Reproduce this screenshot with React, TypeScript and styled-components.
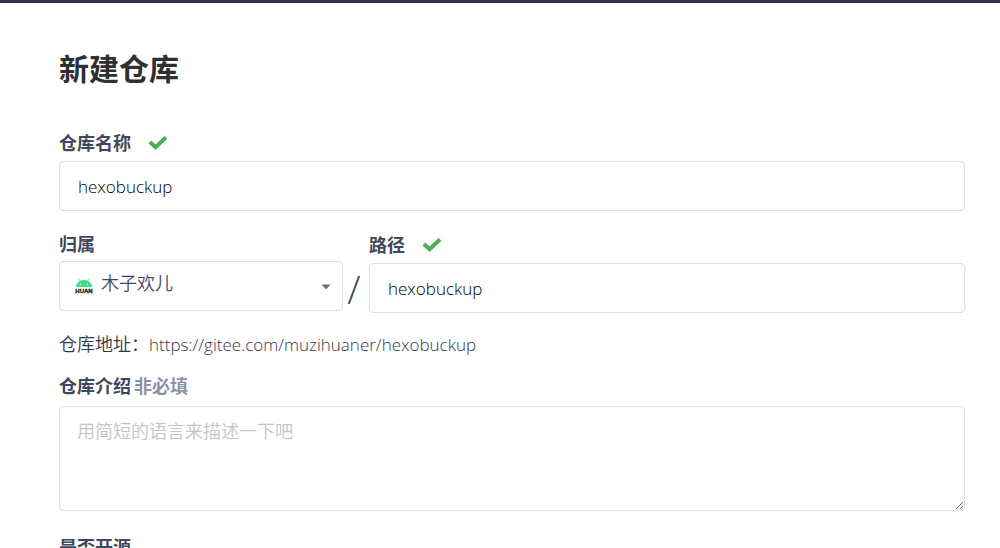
import React from "react";
import styled, { createGlobalStyle, css } from "styled-components";

const GlobalStyle = createGlobalStyle`
  *, *::before, *::after { box-sizing: border-box; }
  body {
    margin: 0;
    background: #fff;
    color: #40485b;
    font-family: "Open Sans", "Noto Sans CJK SC", sans-serif;
    font-size: 18px;
    line-height: 24px;
  }
`;

const Page = styled.div`
  height: 100vh;
  overflow: hidden;
`;

const TopBar = styled.header`
  height: 3px;
  background: #2f3542;
`;

const Form = styled.form`
  padding: 46px 35px 0 59px;
`;

const Title = styled.h1`
  margin: 0 0 42px;
  color: #303030;
  font-size: 30px;
  line-height: 40px;
  font-weight: 700;
`;

const LabelRow = styled.div<{ $compact?: boolean }>`
  display: flex;
  align-items: center;
  gap: 17px;
  height: ${(p) => (p.$compact ? 22 : 24)}px;
  margin-bottom: 6px;
`;

const Label = styled.label`
  font-weight: 700;
`;

const Optional = styled.span`
  margin-left: 3px;
  color: #8c92a4;
`;

const control = css`
  display: block;
  width: 100%;
  border: 1px solid #dce0e8;
  border-radius: 4px;
  background: #fff;
  font-family: inherit;
  font-weight: 350;
  outline: none;
`;

const TextInput = styled.input`
  ${control}
  height: 50px;
  padding: 0 18px;
  color: #000;
  font-size: 17px;
`;

const Select = styled.select`
  ${control}
  appearance: none;
  height: 50px;
  padding: 0 36px 6px 41px;
  color: #40485b;
  font-size: 18px;
`;

const SelectBox = styled.div`
  position: relative;
`;

const Avatar = styled.svg`
  position: absolute;
  left: 16px;
  top: 15px;
  pointer-events: none;
`;

const Caret = styled.svg`
  position: absolute;
  right: 12px;
  top: 23px;
  pointer-events: none;
`;

const PathRow = styled.div`
  display: grid;
  grid-template-columns: minmax(0, 284fr) 26px minmax(0, 596fr);
  margin-top: 22px;
`;

const Slash = styled.span`
  align-self: end;
  padding: 0 4px 4px 0;
  font-size: 39px;
  line-height: 40px;
  font-weight: 300;
  text-align: center;
`;

const Address = styled.p`
  margin: 19px 0 17px;
  color: #30374a;
  font-weight: 350;
`;

const Url = styled.span`
  font-size: 17px;
`;

const TextArea = styled.textarea`
  ${control}
  height: 105px;
  margin: 8px 0 24px;
  padding: 11px 17px;
  color: #222;
  font-size: 18px;
  line-height: 26px;
  resize: vertical;
  &::placeholder { color: #c3c3c3; opacity: 1; }
`;

const Check = () => (
  <svg width="20" height="14" viewBox="0 0 20 14" aria-hidden="true">
    <path d="M1.8 6 7.6 11.2 18 1.4" fill="none" stroke="#4caf50" strokeWidth="4" />
  </svg>
);

const OwnerAvatar = () => (
  <Avatar width="18" height="18" viewBox="0 0 18 18" aria-hidden="true">
    <path d="M1 11C1.4 7 4.6 4 9 4s7.6 3 8 7Z" fill="#3ddc84" />
    <path d="m3.6 2.4 2 3.4M14.4 2.4l-2 3.4" stroke="#3ddc84" strokeWidth="0.8" />
    <circle cx="5.4" cy="8.2" r="0.7" fill="#fff" />
    <circle cx="12.6" cy="8.2" r="0.7" fill="#fff" />
    <text x="9" y="17" textAnchor="middle" fontFamily="Liberation Sans, sans-serif" fontSize="6" fontWeight="700" fill="#111" stroke="#111" strokeWidth="0.3">
      HUAN
    </text>
  </Avatar>
);

export default function App() {
  return (
    <Page>
      <GlobalStyle />
      <TopBar />
      <Form>
        <Title>新建仓库</Title>
        <LabelRow>
          <Label htmlFor="name">仓库名称</Label>
          <Check />
        </LabelRow>
        <TextInput id="name" type="text" defaultValue="hexobuckup" />
        <PathRow>
          <div>
            <LabelRow $compact>
              <Label htmlFor="owner">归属</Label>
            </LabelRow>
            <SelectBox>
              <Select id="owner">
                <option>木子欢儿</option>
              </Select>
              <OwnerAvatar />
              <Caret width="10" height="6" viewBox="0 0 10 6" aria-hidden="true">
                <path d="M0.5 0.5h9L5 5.5Z" fill="#6b7080" />
              </Caret>
            </SelectBox>
          </div>
          <Slash>/</Slash>
          <div>
            <LabelRow>
              <Label htmlFor="path">路径</Label>
              <Check />
            </LabelRow>
            <TextInput id="path" type="text" defaultValue="hexobuckup" />
          </div>
        </PathRow>
        <Address>
          仓库地址：<Url>https://gitee.com/muzihuaner/hexobuckup</Url>
        </Address>
        <Label htmlFor="intro">
          仓库介绍<Optional>非必填</Optional>
        </Label>
        <TextArea id="intro" placeholder="用简短的语言来描述一下吧" />
        <Label as="div">是否开源</Label>
      </Form>
    </Page>
  );
}
